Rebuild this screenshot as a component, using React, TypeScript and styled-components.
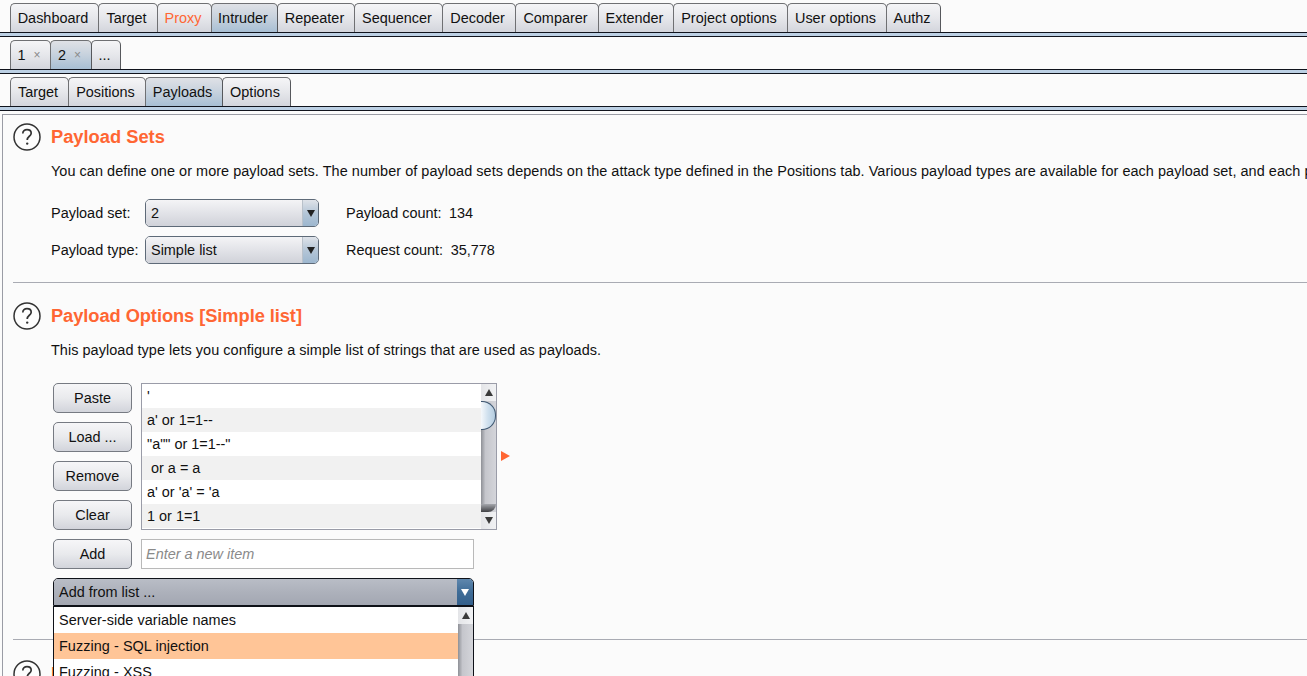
import React from "react";
import styled, { createGlobalStyle } from "styled-components";

const GlobalStyle = createGlobalStyle`
  html, body {
    margin: 0;
    padding: 0;
    width: 1307px;
    height: 676px;
    overflow: hidden;
    background: #fbfbfb;
    font-family: "Liberation Sans", Arial, sans-serif;
    font-size: 14.45px;
    color: #111;
  }
  * { box-sizing: border-box; }
`;

const Page = styled.div`
  width: 1307px;
  height: 676px;
  overflow: hidden;
  padding-top: 3px;
`;

const TabStrip = styled.div`
  display: flex;
  padding-left: 10px;
  height: 29px;
  align-items: stretch;
`;

const TabRule = styled.div`
  height: 5px;
  margin-bottom: 3px;
  background: #bcd0e4;
  border-top: 1px solid #10131c;
  border-bottom: 1px solid #10131c;
`;

const Tab = styled.div<{ $w: number; $active?: boolean; $orange?: boolean }>`
  width: ${(p) => p.$w}px;
  flex: none;
  display: flex;
  align-items: center;
  justify-content: center;
  gap: 8px;
  padding: 0 3px 1px 0;
  border: 1px solid #6f7073;
  border-right-color: #56585c;
  border-bottom: none;
  margin-right: -1px;
  border-radius: 5px 5px 0 0;
  color: ${(p) => (p.$orange ? "#ff6633" : "#111")};
  background: ${(p) =>
    p.$active
      ? "linear-gradient(#dfe1e6 0%, #c9d3de 45%, #a8bfd4 100%)"
      : "linear-gradient(#f5f5f7 0%, #e6e7eb 50%, #d3d5dc 100%)"};
  position: ${(p) => (p.$active ? "relative" : "static")};
  z-index: ${(p) => (p.$active ? 1 : 0)};
`;

const CloseMark = styled.span`
  font-size: 12px;
  color: #8a8a8a;
`;

const Panel = styled.div`
  margin-left: 2px;
  border-left: 1px solid #9a9ca5;
  border-top: 1px solid #9a9ca5;
  height: 600px;
  padding-left: 10px;
`;

const Section = styled.section<{ $h: number; $pad: number }>`
  height: ${(p) => p.$h}px;
  padding-top: ${(p) => p.$pad}px;
  border-bottom: 1px solid #a9abb3;
`;

const LastSection = styled.section`
  padding-top: 20px;
`;

const Heading = styled.div`
  display: flex;
  align-items: center;
  gap: 10px;
  height: 28px;
`;

const HelpGlyph = styled.svg`
  flex: none;
`;

const Title = styled.h2<{ $track?: number }>`
  margin: 0;
  font-size: 18.3px;
  font-weight: 700;
  letter-spacing: ${(p) => p.$track ?? 0}px;
  color: #ff6633;
  white-space: nowrap;
`;

const Desc = styled.p`
  margin: 12px 0 0 38px;
  height: 17px;
  line-height: 17px;
  letter-spacing: 0.05px;
  white-space: nowrap;
`;

const FormGrid = styled.div`
  margin: 19px 0 0 38px;
  display: grid;
  grid-template-columns: 94px 174px 27px auto;
  grid-auto-rows: 28px;
  row-gap: 9px;
  align-items: center;
`;

const FormLabel = styled.span`
  padding-bottom: 1px;
`;

const Combo = styled.div`
  grid-column: 2;
  height: 28px;
  display: flex;
  border: 1px solid #5e6a78;
  border-radius: 5px;
  overflow: hidden;
`;

const ComboText = styled.div`
  flex: 1;
  padding: 0 0 1px 5px;
  display: flex;
  align-items: center;
  background: linear-gradient(#f4f4f6 0%, #e2e3e8 50%, #d0d2d9 100%);
`;

const ComboArrow = styled.div`
  width: 16px;
  display: flex;
  align-items: center;
  justify-content: center;
  background: linear-gradient(#dfe3e9 0%, #b5c6d7 50%, #9db7cf 100%);
  border-left: 1px solid #b9c1ca;
`;

const Count = styled.div`
  grid-column: 4;
  white-space: nowrap;
  display: flex;
  gap: 7.5px;
  padding-bottom: 1px;
`;

const ListArea = styled.div`
  margin: 24px 0 0 40px;
  display: grid;
  grid-template-columns: 79px 333px 23px;
  column-gap: 9px;
  width: 460px;
  position: relative;
`;

const ButtonColumn = styled.div`
  display: flex;
  flex-direction: column;
  gap: 9px;
`;

const PlainButton = styled.div`
  height: 30px;
  display: flex;
  align-items: center;
  justify-content: center;
  padding-bottom: 1px;
  border: 1px solid #767a82;
  border-radius: 5px;
  background: linear-gradient(#f6f6f8 0%, #e9eaed 50%, #d2d4db 100%);
`;

const ListBox = styled.div`
  width: 356px;
  height: 147px;
  border: 1px solid #9a9ca8;
  display: flex;
  background: #fff;
`;

const ListRows = styled.div`
  flex: 1;
`;

const ListRow = styled.div<{ $even: boolean }>`
  height: 24px;
  padding-left: 5px;
  line-height: 24px;
  white-space: pre;
  background: ${(p) => (p.$even ? "#f1f1f1" : "#fff")};
`;

const ScrollBar = styled.div`
  width: 15px;
  display: flex;
  flex-direction: column;
  position: relative;
  background: linear-gradient(90deg, #8e9096 0%, #c5c6cc 30%, #d4d5da 100%);
`;

const ScrollEnd = styled.div`
  height: 17px;
  flex: none;
  display: flex;
  align-items: center;
  justify-content: center;
  background: linear-gradient(90deg, #e4e5e8, #f1f2f4);
`;

const ScrollTrack = styled.div`
  flex: 1;
  position: relative;
`;

const ScrollThumb = styled.div`
  position: absolute;
  top: 0;
  left: 0;
  width: 15px;
  height: 29px;
  border: 1px solid #3d5670;
  border-left: none;
  border-radius: 0 14px 14px 0;
  background: linear-gradient(90deg, #f5f8fb 0%, #cfe0ee 50%, #b5cde0 100%);
`;

const TrackFoot = styled.div`
  position: absolute;
  bottom: 0;
  left: 0;
  width: 15px;
  height: 8px;
  border-radius: 0 0 12px 0;
  background: linear-gradient(#a5a7ad, #3f4044);
`;

const Marker = styled.div`
  position: absolute;
  left: 448px;
  top: 68px;
  width: 0;
  height: 0;
  border-left: 9px solid #ff6633;
  border-top: 5px solid transparent;
  border-bottom: 5px solid transparent;
`;

const EntryInput = styled.div`
  height: 30px;
  border: 1px solid #b9b9b9;
  background: #fff;
  padding-left: 4px;
  line-height: 28px;
  font-style: italic;
  color: #8a8a8a;
`;

const OpenCombo = styled.div`
  grid-column: 1 / span 2;
  margin-top: 9px;
  width: 421px;
  height: 28px;
  display: flex;
  border: 1px solid #0e1118;
  border-radius: 5px 5px 0 0;
  overflow: hidden;
`;

const OpenText = styled.div`
  flex: 1;
  padding-left: 5px;
  line-height: 26px;
  background: linear-gradient(#b9bdc6 0%, #adb1bb 50%, #a3a7b2 100%);
`;

const OpenArrow = styled.div`
  width: 16px;
  display: flex;
  align-items: center;
  justify-content: center;
  background: linear-gradient(#5f87ad 0%, #3f6c97 50%, #34608c 100%);
`;

const Popup = styled.div`
  position: absolute;
  left: 0;
  top: 223px;
  width: 421px;
  height: 90px;
  display: flex;
  background: #fff;
  border: 1px solid #0e1118;
  z-index: 3;
`;

const PopupRow = styled.div<{ $hot?: boolean }>`
  height: 26px;
  line-height: 26px;
  padding-left: 5px;
  white-space: nowrap;
  letter-spacing: 0.05px;
  background: ${(p) => (p.$hot ? "#ffc597" : "#fff")};
`;

const AddRow = styled.div`
  grid-column: 1 / span 2;
  display: grid;
  grid-template-columns: 79px 333px;
  column-gap: 9px;
  margin-top: 9px;
`;

const Triangle = ({ dir, color }: { dir: "up" | "down"; color: string }) => (
  <svg width="8" height="7" viewBox="0 0 8 7">
    <path d={dir === "up" ? "M4 0 L8 7 L0 7 Z" : "M0 0 L8 0 L4 7 Z"} fill={color} />
  </svg>
);

const HelpIcon = () => (
  <HelpGlyph width="28" height="28" viewBox="0 0 28 28">
    <circle cx="14" cy="14" r="13" fill="#fdfdfd" stroke="#333" strokeWidth="1.5" />
    <path
      d="M9.8 10.6 C9.8 8 11.6 6.6 14 6.6 C16.4 6.6 18.2 8 18.2 10.2 C18.2 13.2 14.2 13.4 14.2 17"
      fill="none"
      stroke="#333"
      strokeWidth="1.7"
    />
    <circle cx="14.2" cy="20.6" r="1.2" fill="#333" />
  </HelpGlyph>
);

const mainTabs: [string, number, boolean?, boolean?][] = [
  ["Dashboard", 89],
  ["Target", 60],
  ["Proxy", 55, false, true],
  ["Intruder", 67, true],
  ["Repeater", 78],
  ["Sequencer", 89],
  ["Decoder", 74],
  ["Comparer", 84],
  ["Extender", 76],
  ["Project options", 115],
  ["User options", 100],
  ["Authz", 55],
];

const subTabs: [string, number, boolean?][] = [
  ["Target", 59],
  ["Positions", 78],
  ["Payloads", 78, true],
  ["Options", 69],
];

const payloads = ["'", "a' or 1=1--", '"a"" or 1=1--"', " or a = a", "a' or 'a' = 'a", "1 or 1=1"];

const App = () => {
  return (
    <Page>
      <GlobalStyle />
      <TabStrip>
        {mainTabs.map(([label, w, active, orange]) => (
          <Tab key={label} $w={w} $active={active} $orange={orange}>
            {label}
          </Tab>
        ))}
      </TabStrip>
      <TabRule />
      <TabStrip>
        <Tab $w={41}>
          1 <CloseMark>×</CloseMark>
        </Tab>
        <Tab $w={42} $active>
          2 <CloseMark>×</CloseMark>
        </Tab>
        <Tab $w={30}>...</Tab>
      </TabStrip>
      <TabRule />
      <TabStrip>
        {subTabs.map(([label, w, active]) => (
          <Tab key={label} $w={w} $active={active}>
            {label}
          </Tab>
        ))}
      </TabStrip>
      <TabRule />
      <Panel>
        <Section $h={168} $pad={8}>
          <Heading>
            <HelpIcon />
            <Title>Payload Sets</Title>
          </Heading>
          <Desc>
            You can define one or more payload sets. The number of payload sets depends on the attack type defined in
            the Positions tab. Various payload types are available for each payload set, and each payload type can be
            customized in different ways.
          </Desc>
          <FormGrid>
            <FormLabel>Payload set:</FormLabel>
            <Combo>
              <ComboText>2</ComboText>
              <ComboArrow>
                <Triangle dir="down" color="#222" />
              </ComboArrow>
            </Combo>
            <Count>
              <span>Payload count:</span> <span>134</span>
            </Count>
            <FormLabel>Payload type:</FormLabel>
            <Combo>
              <ComboText>Simple list</ComboText>
              <ComboArrow>
                <Triangle dir="down" color="#222" />
              </ComboArrow>
            </Combo>
            <Count>
              <span>Request count:</span> <span>35,778</span>
            </Count>
          </FormGrid>
        </Section>
        <Section $h={357} $pad={19}>
          <Heading>
            <HelpIcon />
            <Title $track={-0.07}>Payload Options [Simple list]</Title>
          </Heading>
          <Desc>This payload type lets you configure a simple list of strings that are used as payloads.</Desc>
          <ListArea>
            <ButtonColumn>
              <PlainButton>Paste</PlainButton>
              <PlainButton>Load ...</PlainButton>
              <PlainButton>Remove</PlainButton>
              <PlainButton>Clear</PlainButton>
            </ButtonColumn>
            <ListBox>
              <ListRows>
                {payloads.map((item, i) => (
                  <ListRow key={item} $even={i % 2 === 1}>
                    {item}
                  </ListRow>
                ))}
              </ListRows>
              <ScrollBar>
                <ScrollEnd>
                  <Triangle dir="up" color="#3a3a3a" />
                </ScrollEnd>
                <ScrollTrack>
                  <ScrollThumb />
                  <TrackFoot />
                </ScrollTrack>
                <ScrollEnd>
                  <Triangle dir="down" color="#3a3a3a" />
                </ScrollEnd>
              </ScrollBar>
            </ListBox>
            <Marker />
            <AddRow>
              <PlainButton>Add</PlainButton>
              <EntryInput>Enter a new item</EntryInput>
            </AddRow>
            <OpenCombo>
              <OpenText>Add from list ...</OpenText>
              <OpenArrow>
                <Triangle dir="down" color="#fff" />
              </OpenArrow>
            </OpenCombo>
            <Popup>
              <ListRows>
                <PopupRow>Server-side variable names</PopupRow>
                <PopupRow $hot>Fuzzing - SQL injection</PopupRow>
                <PopupRow>Fuzzing - XSS</PopupRow>
              </ListRows>
              <ScrollBar>
                <ScrollEnd>
                  <Triangle dir="up" color="#3a3a3a" />
                </ScrollEnd>
                <ScrollTrack />
              </ScrollBar>
            </Popup>
          </ListArea>
        </Section>
        <LastSection>
          <Heading>
            <HelpIcon />
            <Title>Payload Processing</Title>
          </Heading>
        </LastSection>
      </Panel>
    </Page>
  );
};

export default App;
